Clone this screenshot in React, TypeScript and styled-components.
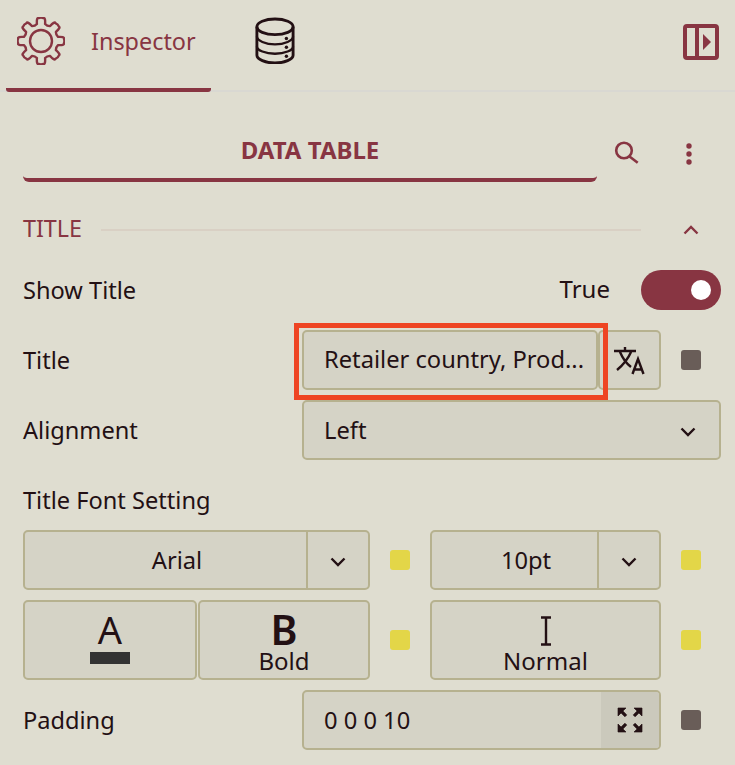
import { createGlobalStyle, styled } from 'styled-components';

const C = {
  bg: '#dfddd0',
  field: '#d5d3c6',
  fieldDark: '#cbc9bc',
  border: '#b6b18f',
  maroon: '#883542',
  ink: '#231014',
  rule: '#d9d8d2',
  sectionRule: '#d9d0c4',
  alert: '#ee4423',
  grey: '#695d58',
  yellow: '#e3d648',
};

const Global = createGlobalStyle`
  * { box-sizing: border-box; }
  html, body { margin: 0; background: ${C.bg}; }
  body { font-family: "Noto Sans", "Open Sans", sans-serif; color: ${C.ink}; }
`;

const Page = styled.div`
  width: 735px;
  height: 765px;
  overflow: hidden;
`;

const Header = styled.header`
  display: flex;
  height: 92px;
  padding: 0 16px 0 6px;
  box-shadow: inset 0 -2px 0 ${C.rule};
`;

const ActiveTab = styled.div`
  display: flex;
  align-items: flex-start;
  width: 205px;
  padding: 17px 0 0 11px;
  border-bottom: 4px solid ${C.maroon};
  border-radius: 0 0 3px 3px;
`;

const TabLabel = styled.span`
  margin: 3px 0 0 26px;
  font-size: 23.4px;
  line-height: 42px;
  color: ${C.maroon};
`;

const DataTab = styled.div`
  margin: 17px 0 0 44px;
`;

const Collapse = styled.div`
  margin: 24px 0 0 auto;
`;

const Panel = styled.main`
  padding: 30px 14px 0 23px;
`;

const TableBar = styled.div`
  display: flex;
  align-items: center;
`;

const TableTitle = styled.h2`
  width: 574px;
  height: 60px;
  margin: 0;
  border-bottom: 4px solid ${C.maroon};
  border-radius: 0 0 6px 6px;
  font-size: 24px;
  font-weight: 700;
  line-height: 56px;
  text-align: center;
  color: ${C.maroon};
`;

const TableActions = styled.div`
  display: flex;
  align-items: center;
  gap: 45px;
  margin: 3px 0 0 16px;
`;

const SectionHead = styled.div`
  display: flex;
  align-items: center;
  height: 40px;
  margin-top: 28px;
`;

const SectionName = styled.h3`
  margin: 0 0 4px;
  font-size: 23.3px;
  font-weight: 400;
  color: ${C.maroon};
`;

const SectionRule = styled.div`
  width: 540px;
  height: 2px;
  margin-left: 19px;
  background: ${C.sectionRule};
`;

const SectionToggle = styled.div`
  display: flex;
  margin-left: 42px;
`;

const ToggleRow = styled.div`
  display: flex;
  align-items: center;
  height: 40px;
  margin: 20px 0;
`;

const Label = styled.span`
  font-size: 23.6px;
  line-height: 40px;
`;

const ToggleValue = styled.span`
  margin: 0 0 3px auto;
  font-size: 24px;
`;

const Toggle = styled.div`
  display: flex;
  align-items: center;
  justify-content: flex-end;
  width: 80px;
  height: 40px;
  margin-left: 31px;
  padding-right: 10px;
  border-radius: 20px;
  background: ${C.maroon};
`;

const Knob = styled.div`
  width: 20px;
  height: 20px;
  border-radius: 50%;
  background: #fff;
`;

const Stack = styled.div`
  display: flex;
  flex-direction: column;
  gap: 10px;
`;

const FieldRow = styled.div`
  display: grid;
  grid-template-columns: 279px 1fr;
  align-items: center;
`;

const Cluster = styled.div`
  display: flex;
  align-items: center;
`;

const Field = styled.div<{ $grow?: boolean }>`
  display: flex;
  align-items: center;
  height: 60px;
  ${(p) => (p.$grow ? 'flex: 1;' : '')}
  min-width: 0;
  border: 2px solid ${C.border};
  border-radius: 5px;
  background: ${C.field};
  font-size: 23.7px;
`;

const FieldText = styled.span<{ $center?: boolean }>`
  flex: 1;
  padding-left: ${(p) => (p.$center ? '23px' : '20px')};
  text-align: ${(p) => (p.$center ? 'center' : 'left')};
  white-space: nowrap;
`;

const TitleText = styled(FieldText)`
  margin-bottom: 2px;
`;

const TitleField = styled(Field)`
  position: relative;
  width: 296px;
`;

const Highlight = styled.div`
  position: absolute;
  top: -9px;
  left: -10px;
  width: 314px;
  height: 77px;
  border: 5px solid ${C.alert};
  z-index: 1;
`;

const IconField = styled(Field)`
  justify-content: center;
  width: 63px;
`;

const Chevron = styled.div`
  display: flex;
  justify-content: center;
  align-items: center;
  align-self: stretch;
  width: 62px;
  padding-top: 4px;
  border-left: 2px solid ${C.border};
`;

const AlignChevron = styled.div`
  display: flex;
  margin: 4px 23px 0 0;
`;

const Marker = styled.div<{ $color: string }>`
  width: 20px;
  height: 20px;
  flex: none;
  border-radius: 3px;
  background: ${(p) => p.$color};
`;

const MarkerSlot = styled.div`
  display: flex;
  justify-content: center;
  width: 60px;
  flex: none;
`;

const FontHead = styled.div`
  height: 40px;
  margin: 20px 0 10px;
  font-size: 23.6px;
  line-height: 40px;
`;

const FontGrid = styled.div`
  display: grid;
  grid-template-columns: 347px 60px 231px 60px;
  row-gap: 10px;
  align-items: center;
`;

const ButtonPair = styled.div`
  display: flex;
  gap: 1px;
`;

const StyleButton = styled.div<{ $width?: number }>`
  display: flex;
  flex-direction: column;
  align-items: center;
  width: ${(p) => (p.$width ? `${p.$width}px` : '100%')};
  height: 80px;
  border: 2px solid ${C.border};
  border-radius: 5px;
  background: ${C.field};
`;

const ColorGlyph = styled.span`
  height: 33px;
  margin-top: 11px;
  font-size: 38px;
  line-height: 33px;
`;

const BoldGlyph = styled.span`
  height: 33px;
  margin-top: 11px;
  font-size: 41px;
  font-weight: 600;
  line-height: 33px;
`;

const Swatch = styled.div`
  width: 40px;
  height: 12px;
  margin-top: 6px;
  background: #333;
`;

const Caption = styled.span`
  font-size: 24px;
  line-height: 30px;
`;

const CursorWrap = styled.div`
  display: flex;
  align-items: flex-end;
  height: 35px;
  margin-top: 9px;
`;

const PaddingAction = styled.div`
  display: flex;
  align-items: center;
  justify-content: center;
  align-self: stretch;
  width: 58px;
  background: ${C.fieldDark};
  border-radius: 0 3px 3px 0;
`;

const PaddingRow = styled(FieldRow)`
  margin-top: 10px;
`;

// 8 tooth gear outline, rounded with the stroke join
function gearPath(cx: number, cy: number, outer: number, inner: number) {
  const teeth = 8;
  const pts: string[] = [];
  for (let i = 0; i < teeth; i++) {
    const a = (i * 2 * Math.PI) / teeth - Math.PI / 2;
    const step = (2 * Math.PI) / teeth;
    const p = (r: number, o: number) =>
      `${(cx + r * Math.cos(a + o)).toFixed(2)} ${(cy + r * Math.sin(a + o)).toFixed(2)}`;
    pts.push(`${i === 0 ? 'M' : 'L'}${p(inner, -step * 0.3)}`);
    pts.push(`Q${p(outer + 1, -step * 0.24)} ${p(outer, -step * 0.14)}`);
    pts.push(`Q${p(outer + 1, 0)} ${p(outer, step * 0.14)}`);
    pts.push(`Q${p(outer + 1, step * 0.24)} ${p(inner, step * 0.3)}`);
    pts.push(`Q${p(inner - 1.5, step * 0.5)} ${p(inner, step * 0.7)}`);
  }
  return pts.join(' ') + 'Z';
}

const GearIcon = () => (
  <svg width="48" height="48" viewBox="0 0 48 48" fill="none" stroke={C.maroon} strokeWidth="2.4" strokeLinejoin="round">
    <path d={gearPath(24, 24, 23, 17.5)} />
    <circle cx="24" cy="24" r="11" />
  </svg>
);

const DatabaseIcon = () => (
  <svg width="40" height="47" viewBox="0 0 42 48" preserveAspectRatio="none" fill="none" stroke={C.ink} strokeWidth="3">
    <ellipse cx="21" cy="10" rx="19" ry="8" />
    <path d="M2 10V39C2 43 11 47 21 47S40 43 40 39V10" />
    <path d="M2 20C2 24 11 28 21 28S40 24 40 20" strokeWidth="2.4" />
    <path d="M2 30C2 34 11 37.5 21 37.5S40 34 40 30" strokeWidth="2.4" />
    <circle cx="33" cy="22" r="1.8" fill={C.ink} stroke="none" />
    <circle cx="33" cy="31" r="1.8" fill={C.ink} stroke="none" />
    <circle cx="33" cy="40" r="1.8" fill={C.ink} stroke="none" />
  </svg>
);

const CollapseIcon = () => (
  <svg width="36" height="36" viewBox="0 0 36 36">
    <rect x="2" y="2" width="32" height="32" rx="2" fill="none" stroke={C.maroon} strokeWidth="4" />
    <rect x="12" y="2" width="4" height="32" fill={C.maroon} />
    <path d="M20 10L28 18L20 26Z" fill={C.maroon} />
  </svg>
);

const SearchIcon = () => (
  <svg width="28" height="28" viewBox="0 0 28 28" fill="none" stroke={C.maroon} strokeWidth="2.6">
    <circle cx="11" cy="10.5" r="7.8" />
    <path d="M16.5 16.5L24.7 22.8" />
  </svg>
);

const DotsIcon = () => (
  <svg width="6" height="22" viewBox="0 0 6 22" fill={C.maroon}>
    <circle cx="3" cy="3" r="2.7" />
    <circle cx="3" cy="11" r="2.7" />
    <circle cx="3" cy="19" r="2.7" />
  </svg>
);

const ChevronIcon = ({ up, color = C.ink }: { up?: boolean; color?: string }) => (
  <svg width="16" height="10" viewBox="0 0 16 10" fill="none" stroke={color} strokeWidth="2.4">
    <path d={up ? 'M1.5 8.5L8 2L14.5 8.5' : 'M1.5 1.5L8 8L14.5 1.5'} />
  </svg>
);

const TranslateIcon = () => (
  <svg width="32" height="30" viewBox="0 0 32 30" fill="none" stroke={C.ink} strokeWidth="2.4">
    <path d="M0 6H22M11 2V6M6 7C9 14 13 19 17 22M17 7C14 14 9 20 3 25" />
    <path d="M18.5 29L24 14L29.5 29M20.5 24.5H27.5" />
  </svg>
);

const CursorIcon = () => (
  <svg width="12" height="30" viewBox="0 0 12 30" fill="none" stroke={C.ink} strokeWidth="2.4">
    <path d="M1 1.5H11M1 28.5H11M6 1.5V28.5" />
  </svg>
);

const ExpandIcon = () => (
  <svg width="32" height="32" viewBox="0 0 24 24" fill={C.ink} stroke={C.ink} strokeWidth="0.5">
    <path d="M15 3l2.3 2.3-2.89 2.87 1.42 1.42L18.7 6.7 21 9V3zM3 9l2.3-2.3 2.87 2.89 1.42-1.42L6.7 5.3 9 3H3zm6 12l-2.3-2.3 2.89-2.87-1.42-1.42L5.3 17.3 3 15v6zm12-6l-2.3 2.3-2.87-2.89-1.42 1.42 2.89 2.87L15 21h6z" />
  </svg>
);

export default function App() {
  return (
    <Page>
      <Global />
      <Header>
        <ActiveTab>
          <GearIcon />
          <TabLabel>Inspector</TabLabel>
        </ActiveTab>
        <DataTab>
          <DatabaseIcon />
        </DataTab>
        <Collapse>
          <CollapseIcon />
        </Collapse>
      </Header>
      <Panel>
        <TableBar>
          <TableTitle>DATA TABLE</TableTitle>
          <TableActions>
            <SearchIcon />
            <DotsIcon />
          </TableActions>
        </TableBar>

        <SectionHead>
          <SectionName>TITLE</SectionName>
          <SectionRule />
          <SectionToggle>
            <ChevronIcon up color={C.maroon} />
          </SectionToggle>
        </SectionHead>

        <ToggleRow>
          <Label>Show Title</Label>
          <ToggleValue>True</ToggleValue>
          <Toggle>
            <Knob />
          </Toggle>
        </ToggleRow>

        <Stack>
          <FieldRow>
            <Label>Title</Label>
            <Cluster>
              <TitleField>
                <Highlight />
                <TitleText>Retailer country, Prod...</TitleText>
              </TitleField>
              <IconField>
                <TranslateIcon />
              </IconField>
              <MarkerSlot>
                <Marker $color={C.grey} />
              </MarkerSlot>
            </Cluster>
          </FieldRow>
          <FieldRow>
            <Label>Alignment</Label>
            <Field>
              <FieldText>Left</FieldText>
              <AlignChevron>
                <ChevronIcon />
              </AlignChevron>
            </Field>
          </FieldRow>
        </Stack>

        <FontHead>Title Font Setting</FontHead>
        <FontGrid>
          <Field>
            <FieldText $center>Arial</FieldText>
            <Chevron>
              <ChevronIcon />
            </Chevron>
          </Field>
          <MarkerSlot>
            <Marker $color={C.yellow} />
          </MarkerSlot>
          <Field>
            <FieldText $center>10pt</FieldText>
            <Chevron>
              <ChevronIcon />
            </Chevron>
          </Field>
          <MarkerSlot>
            <Marker $color={C.yellow} />
          </MarkerSlot>

          <ButtonPair>
            <StyleButton $width={174}>
              <ColorGlyph>A</ColorGlyph>
              <Swatch />
            </StyleButton>
            <StyleButton $width={172}>
              <BoldGlyph>B</BoldGlyph>
              <Caption>Bold</Caption>
            </StyleButton>
          </ButtonPair>
          <MarkerSlot>
            <Marker $color={C.yellow} />
          </MarkerSlot>
          <StyleButton>
            <CursorWrap>
              <CursorIcon />
            </CursorWrap>
            <Caption>Normal</Caption>
          </StyleButton>
          <MarkerSlot>
            <Marker $color={C.yellow} />
          </MarkerSlot>
        </FontGrid>

        <PaddingRow>
          <Label>Padding</Label>
          <Cluster>
            <Field $grow>
              <FieldText>0 0 0 10</FieldText>
              <PaddingAction>
                <ExpandIcon />
              </PaddingAction>
            </Field>
            <MarkerSlot>
              <Marker $color={C.grey} />
            </MarkerSlot>
          </Cluster>
        </PaddingRow>
      </Panel>
    </Page>
  );
}
